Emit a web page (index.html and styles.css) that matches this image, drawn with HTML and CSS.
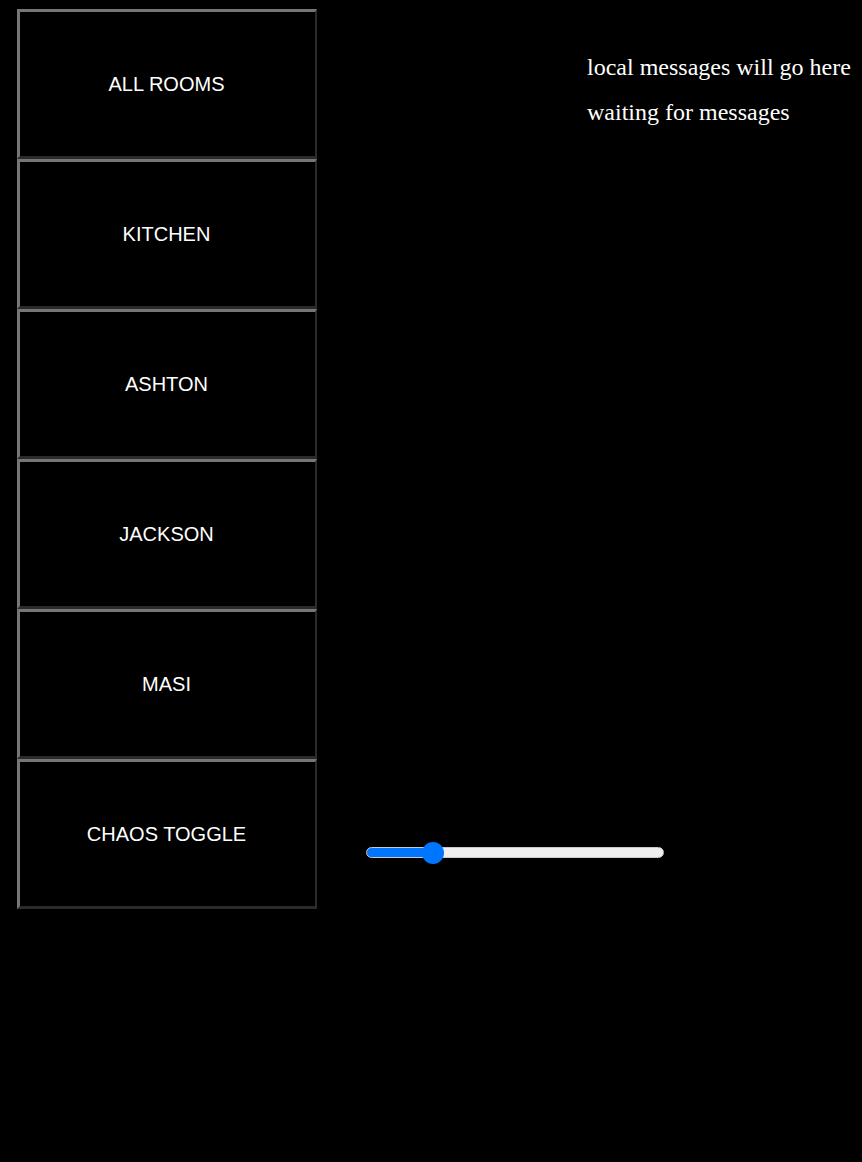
FILE: index.html
```html
<!DOCTYPE html>
<html>
<head>
<meta charset="utf-8">
<link rel="stylesheet" href="styles.css">
</head>
<body>
<div class="layout">
  <div class="rooms">
    <button class="room">ALL ROOMS</button>
    <button class="room">KITCHEN</button>
    <button class="room">ASHTON</button>
    <button class="room">JACKSON</button>
    <button class="room">MASI</button>
    <button class="room">CHAOS TOGGLE</button>
  </div>
  <div class="side">
    <div class="messages">
      <div class="msg">local messages will go here</div>
      <div class="msg">waiting for messages</div>
    </div>
    <input class="slider" type="range" min="0" max="100" value="20" style="background: linear-gradient(to right, #0075ff 0 22%, #efefef 22% 100%);">
  </div>
</div>
</body>
</html>
```
FILE: styles.css
```css
html, body {
  margin: 0;
  padding: 0;
  background: #000;
}
body {
  width: 862px;
  height: 1162px;
  overflow: hidden;
}
.layout {
  display: flex;
  align-items: stretch;
  padding: 9px 0 0 17px;
}
.rooms {
  display: flex;
  flex-direction: column;
  width: 300px;
}
.room {
  box-sizing: border-box;
  width: 300px;
  height: 150px;
  margin: 0;
  padding: 0 2px 0 0;
  background: #000;
  color: #fff;
  font-family: "Liberation Sans", Arial, sans-serif;
  font-size: 20px;
  border-style: solid;
  border-width: 3px 2px 3px 3px;
  border-color: #767676 #2b2b2b #2b2b2b #767676;
}
.side {
  flex: 1;
  display: flex;
  flex-direction: column;
}
.messages {
  padding-left: 270px;
  margin-top: 36px;
  font-family: "Liberation Serif", "Times New Roman", serif;
  font-size: 24px;
  color: #fff;
}
.msg {
  line-height: 45px;
  white-space: nowrap;
}
.slider {
  -webkit-appearance: none;
  appearance: none;
  box-sizing: border-box;
  width: 298px;
  height: 11px;
  margin: auto 0 51px 49px;
  padding: 0;
  border-radius: 6px;
  border: 1px solid #c9c9c9;
  outline: none;
}
.slider::-webkit-slider-thumb {
  -webkit-appearance: none;
  appearance: none;
  width: 22px;
  height: 22px;
  border-radius: 50%;
  background: #0075ff;
  border: none;
}
```
